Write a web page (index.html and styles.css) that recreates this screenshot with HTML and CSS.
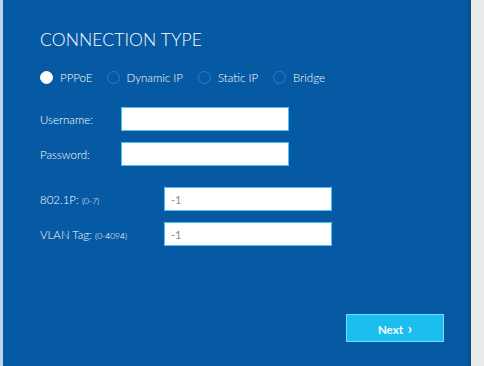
FILE: index.html
```html
<!DOCTYPE html>
<html lang="en">
<head>
    <meta charset="UTF-8">
    <title>Connection Type</title>
    <link rel="stylesheet" href="styles.css">
</head>
<body>
    <div class="panel">
        <h1 class="title">CONNECTION TYPE</h1>
        <div class="radios">
            <label class="radio"><span class="dot checked"></span>PPPoE</label>
            <label class="radio"><span class="dot"></span>Dynamic IP</label>
            <label class="radio"><span class="dot"></span>Static IP</label>
            <label class="radio"><span class="dot"></span>Bridge</label>
        </div>
        <div class="fields">
            <div class="row"><label class="lbl">Username:</label><input class="field" type="text"></div>
            <div class="row"><label class="lbl">Password:</label><input class="field" type="password"></div>
        </div>
        <div class="fields vlan">
            <div class="row"><label class="lbl wide">802.1P: <small>(0-7)</small></label><input class="field" type="text" value="-1"></div>
            <div class="row"><label class="lbl wide">VLAN Tag: <small>(0-4094)</small></label><input class="field" type="text" value="-1"></div>
        </div>
        <div class="actions">
            <button class="next">Next <span class="chev">&#x203A;</span></button>
        </div>
    </div>
</body>
</html>
```
FILE: styles.css
```css
body { margin: 0; background: #e8eaec; font-family: "Lato", "Open Sans", sans-serif; height: 366px; overflow: hidden; }
.panel { width: 471px; height: 366px; box-sizing: border-box; background: #065aa3; border-left: 3px solid #bcd5ea; border-right: 3px solid #0a4e8c; padding: 30px 0 0 37px; color: #fff; }
.title { margin: 0; font-size: 17.5px; font-weight: 300; letter-spacing: 0.1px; line-height: 20px; }
.radios { display: flex; align-items: center; margin-top: 21px; font-size: 11.5px; font-weight: 300; }
.radio { display: flex; align-items: center; margin-right: 15px; }
.radio:first-child { margin-right: 14px; }
.dot { width: 11px; height: 11px; border-radius: 50%; border: 1px solid #2f7ec2; margin-right: 7px; }
.dot.checked { background: #fff; border-color: #fff; }
.fields { display: flex; flex-direction: column; gap: 11px; margin-top: 23px; }
.fields.vlan { margin-top: 21px; }
.row { display: flex; align-items: center; }
.lbl { width: 81px; font-size: 11.5px; font-weight: 300; }
.lbl.wide { width: 124px; }
.lbl small { font-size: 8.5px; }
.field { width: 168px; height: 24px; box-sizing: border-box; border: 1px solid #4cc4f0; background: #fff; padding: 0 6px; font-family: inherit; font-size: 11px; color: #888; outline: none; }
.actions { display: flex; justify-content: flex-end; margin-top: 68px; padding-right: 24px; }
.next { width: 98px; height: 28px; background: #1cbdef; border: 1px solid #7ad7f5; color: #fff; font-family: inherit; font-size: 11.5px; font-weight: bold; }
.chev { font-size: 15px; margin-left: 2px; }
```
